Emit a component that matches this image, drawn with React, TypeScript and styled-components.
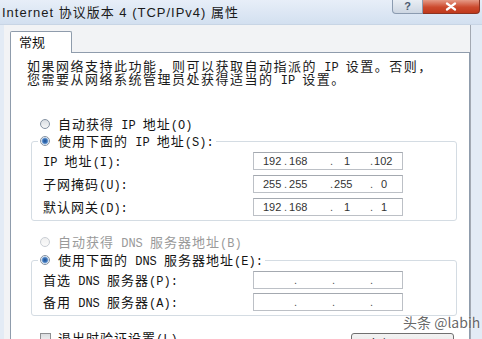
import styled, { createGlobalStyle } from 'styled-components';

interface ISegment {
	dotPad: number;
	gap: number;
	value: string;
	width?: number;
}

const GlobalStyle = createGlobalStyle`
	html, body {
		margin: 0;
		padding: 0;
		background: #dce6f2;
	}
	body {
		width: 482px;
		height: 339px;
		overflow: hidden;
	}
`;

const CJK_RUN = /[\u3000-\u9fff\uff00-\uffef]+|[^\u3000-\u9fff\uff00-\uffef]+/g;

// latin runs in the dialog use a narrower mono face than the CJK glyphs
const Mixed = ({ text }: { text: string }) => {
	const parts = text.match(CJK_RUN) ?? [];
	return (
		<>
			{parts.map((p, i) =>
				/[\u3000-\u9fff\uff00-\uffef]/.test(p[0]) ? <span key={i}>{p}</span> : <Latin key={i}>{p}</Latin>,
			)}
		</>
	);
};

const seg = (dotPad: number, gap: number, value: string, width?: number): ISegment => ({ dotPad, gap, value, width });

// segment widths: 30 / 46 / 40 / rest, dot drawn at the start of each segment after the first
const ipRows: { label: string; segments: ISegment[] }[] = [
	{ label: 'IP 地址(I):', segments: [seg(0, 9, '192', 30), seg(0, 2, '168', 46), seg(0, 11, '1', 40), seg(0, 1, '102')] },
	{ label: '子网掩码(U):', segments: [seg(0, 9, '255', 30), seg(0, 2, '255', 46), seg(0, 1, '255', 40), seg(0, 8, '0')] },
	{ label: '默认网关(D):', segments: [seg(0, 9, '192', 30), seg(0, 2, '168', 46), seg(0, 11, '1', 40), seg(0, 8, '1')] },
];

const emptyRow: ISegment[] = [seg(0, 0, '', 30), seg(10, 0, '', 46), seg(2, 0, '', 40), seg(0, 0, '')];

const dnsRows = [
	{ label: '首选 DNS 服务器(P):', segments: emptyRow },
	{ label: '备用 DNS 服务器(A):', segments: emptyRow },
];

const IpControl = ({ segments }: { segments: ISegment[] }) => (
	<IpBox>
		{segments.map((s, i) => (
			<IpSegment key={i} $width={s.width}>
				{i > 0 && <IpDot $pad={s.dotPad}>.</IpDot>}
				<IpValue $gap={s.gap}>{s.value}</IpValue>
			</IpSegment>
		))}
	</IpBox>
);

const App = () => {
	return (
		<>
			<GlobalStyle />
			<Window>
				<TitleBar>
					<TitleText>Internet 协议版本 4 (TCP/IPv4) 属性</TitleText>
					<CaptionButtons>
						<HelpButton>?</HelpButton>
						<CloseButton>
							<svg width="12" height="9" viewBox="0 0 12 9">
								<path d="M2 1.5 L10 7.5 M10 1.5 L2 7.5" stroke="#fff" strokeWidth="2.2" strokeLinecap="round" />
							</svg>
						</CloseButton>
					</CaptionButtons>
				</TitleBar>
				<ClientArea>
					<TabStrip>
						<Tab>常规</Tab>
					</TabStrip>
					<Panel>
						<Intro>
							<Mixed text="如果网络支持此功能，则可以获取自动指派的 IP 设置。否则，" />
							<br />
							<Mixed text="您需要从网络系统管理员处获得适当的 IP 设置。" />
						</Intro>

						<RadioRow $top={32}>
							<Radio />
							<RowText>
								<Mixed text="自动获得 IP 地址(O)" />
							</RowText>
						</RadioRow>
						<GroupBox $top={3}>
							<Legend>
								<RadioRow>
									<Radio $checked />
									<RowText>
										<Mixed text="使用下面的 IP 地址(S):" />
									</RowText>
								</RadioRow>
							</Legend>
							<FieldGrid $gap={5}>
								{ipRows.map((row) => (
									<FieldRow key={row.label}>
										<RowText>
											<Mixed text={row.label} />
										</RowText>
										<IpControl segments={row.segments} />
									</FieldRow>
								))}
							</FieldGrid>
						</GroupBox>

						<RadioRow $top={14} $disabled>
							<Radio $disabled />
							<RowText>
								<Mixed text="自动获得 DNS 服务器地址(B)" />
							</RowText>
						</RadioRow>
						<GroupBox $top={4}>
							<Legend>
								<RadioRow>
									<Radio $checked />
									<RowText>
										<Mixed text="使用下面的 DNS 服务器地址(E):" />
									</RowText>
								</RadioRow>
							</Legend>
							<FieldGrid $gap={4}>
								{dnsRows.map((row) => (
									<FieldRow key={row.label}>
										<RowText>
											<Mixed text={row.label} />
										</RowText>
										<IpControl segments={row.segments} />
									</FieldRow>
								))}
							</FieldGrid>
						</GroupBox>

						<BottomRow>
							<CheckLabel>
								<CheckBox />
								<RowText>
									<Mixed text="退出时验证设置(L)" />
								</RowText>
							</CheckLabel>
							<AdvancedButton>
								<Mixed text="高级(V)..." />
							</AdvancedButton>
						</BottomRow>
					</Panel>
				</ClientArea>
				<Watermark>头条 @labih</Watermark>
			</Window>
		</>
	);
};

const Window = styled.div`
	position: relative;
	width: 482px;
	height: 339px;
	overflow: hidden;
	display: flex;
	flex-direction: column;
	background: #e3ebf5;
	font-family: 'Noto Sans CJK SC', sans-serif;
	font-size: 13px;
	line-height: 14px;
	letter-spacing: 1px;
	color: #141414;
`;

const Latin = styled.span`
	font-family: 'Liberation Mono', monospace;
	font-size: 12px;
	line-height: 0;
	letter-spacing: 0;
	white-space: pre;
`;

const TitleBar = styled.div`
	height: 25px;
	flex-shrink: 0;
	display: flex;
	justify-content: space-between;
	align-items: flex-start;
	box-sizing: border-box;
	background: linear-gradient(#e7eef8, #d3e0f0);
	border-bottom: 1px solid #c8d5e5;
`;

const TitleText = styled.div`
	padding-left: 2px;
	line-height: 25px;
	font-family: 'Liberation Sans', 'Noto Sans CJK SC', sans-serif;
	font-size: 13px;
	letter-spacing: 1px;
	color: #1a1a1a;
	white-space: nowrap;
`;

const CaptionButtons = styled.div`
	display: flex;
	margin-right: 2px;
`;

const HelpButton = styled.div`
	width: 31px;
	height: 14px;
	box-sizing: border-box;
	border: 1px solid #8b9bb0;
	border-top: none;
	border-radius: 0 0 0 4px;
	background: linear-gradient(#e9eef4, #cdd6e2);
	display: flex;
	align-items: center;
	justify-content: center;
	font-family: 'Liberation Sans', sans-serif;
	font-size: 11px;
	font-weight: bold;
	letter-spacing: 0;
	color: #4b5a70;
	line-height: 1;
`;

const CloseButton = styled.div`
	width: 57px;
	height: 14px;
	box-sizing: border-box;
	border: 1px solid #8a3322;
	border-top: none;
	border-left: none;
	border-radius: 0 0 4px 0;
	background: linear-gradient(#e59a86, #cc4a2e 55%, #c0391c);
	display: flex;
	align-items: center;
	justify-content: center;
`;

const ClientArea = styled.div`
	flex: 1;
	display: flex;
	flex-direction: column;
	width: 467px;
	margin-left: 4px;
	padding: 6px 0 0 6px;
	box-sizing: border-box;
	background: #f2f3f5;
	border-right: 1px solid #a3a9b2;
	min-height: 0;
`;

const TabStrip = styled.div`
	display: flex;
	height: 21px;
	flex-shrink: 0;
`;

const Tab = styled.div`
	position: relative;
	z-index: 1;
	width: 62px;
	height: 22px;
	box-sizing: border-box;
	padding-left: 8px;
	border: 1px solid #8f9cac;
	border-bottom: none;
	border-radius: 2px 2px 0 0;
	background: #fff;
	font-size: 13px;
	letter-spacing: 0;
	line-height: 20px;
	color: #111;
`;

const Panel = styled.div`
	flex: 1;
	min-height: 0;
	overflow: hidden;
	background: #fff;
	border: 1px solid #8f9cac;
	border-bottom: none;
	padding-left: 20px;
`;

const Intro = styled.div`
	margin: 6px 0 0 -4px;
	line-height: 13px;
	letter-spacing: 1.5px;
	white-space: nowrap;
	color: #1a1a1a;
`;

const RadioRow = styled.div<{ $top?: number; $disabled?: boolean }>`
	display: flex;
	align-items: center;
	gap: 8px;
	height: 14px;
	margin-top: ${(p) => p.$top ?? 0}px;
	padding-left: ${(p) => (p.$top !== undefined ? 9 : 0)}px;
	white-space: nowrap;
	color: ${(p) => (p.$disabled ? '#9a9a9a' : '#141414')};
`;

const RowText = styled.span`
	display: block;
	height: 14px;
	line-height: 14px;
	white-space: nowrap;
`;

const Radio = styled.span<{ $checked?: boolean; $disabled?: boolean }>`
	flex-shrink: 0;
	width: 10px;
	height: 10px;
	box-sizing: border-box;
	border-radius: 50%;
	border: 1px solid ${(p) => (p.$disabled ? '#c9ced4' : '#8592a2')};
	background: ${(p) =>
		p.$checked
			? 'radial-gradient(circle, #1d4f91 0, #3f78bd 2.2px, #9dbde3 3.2px, #f4f6f8 3.8px)'
			: p.$disabled
				? 'linear-gradient(#f0f0f0, #fafafa)'
				: 'linear-gradient(#d9dde2, #f5f6f7)'};
`;

const GroupBox = styled.fieldset<{ $top: number }>`
	margin: ${(p) => p.$top}px 0 0 0;
	width: 426px;
	box-sizing: border-box;
	min-inline-size: 0;
	padding: 4px 11px 4px 11px;
	border: 1px solid #d4dce3;
	border-radius: 3px;
`;

const Legend = styled.legend`
	margin-left: -5px;
	padding: 0 2px;
`;

const FieldGrid = styled.div<{ $gap: number }>`
	display: flex;
	flex-direction: column;
	gap: ${(p) => p.$gap}px;
`;

const FieldRow = styled.div`
	display: grid;
	grid-template-columns: 210px 150px;
	align-items: center;
	height: 18px;
`;

const IpBox = styled.div`
	display: flex;
	height: 18px;
	box-sizing: border-box;
	border: 1px solid #bcc0c6;
	border-top-color: #a4a9b0;
	background: #fff;
	font-family: 'Liberation Sans', sans-serif;
	font-size: 11px;
	letter-spacing: 0;
	line-height: 16px;
	color: #333;
`;

const IpSegment = styled.span<{ $width?: number }>`
	display: flex;
	white-space: pre;
	${(p) => (p.$width ? `width: ${p.$width}px; flex-shrink: 0;` : 'flex: 1;')}
`;

const IpDot = styled.span<{ $pad: number }>`
	padding-left: ${(p) => p.$pad}px;
	color: #555;
`;

const IpValue = styled.span<{ $gap: number }>`
	padding-left: ${(p) => p.$gap}px;
`;

const BottomRow = styled.div`
	display: flex;
	justify-content: space-between;
	align-items: flex-start;
	width: 423px;
	margin-top: 15px;
`;

const CheckLabel = styled.div`
	display: flex;
	align-items: center;
	gap: 7px;
	padding-left: 9px;
	height: 14px;
	white-space: nowrap;
`;

const CheckBox = styled.span`
	width: 11px;
	height: 11px;
	box-sizing: border-box;
	border: 1px solid #8e8f92;
	background: linear-gradient(#dadcdf, #f7f7f8);
`;

const AdvancedButton = styled.div`
	margin-top: 2px;
	width: 103px;
	height: 22px;
	box-sizing: border-box;
	border: 1px solid #707070;
	border-radius: 3px;
	background: linear-gradient(#f2f2f2, #e3e3e3);
	text-align: center;
	line-height: 20px;
`;

const Watermark = styled.div`
	position: absolute;
	left: 403px;
	top: 313px;
	font-size: 14px;
	line-height: 18px;
	letter-spacing: 0;
	color: rgba(85, 85, 85, 0.9);
	text-shadow: 0 0 2px #fff;
	white-space: nowrap;
`;

export default App;
